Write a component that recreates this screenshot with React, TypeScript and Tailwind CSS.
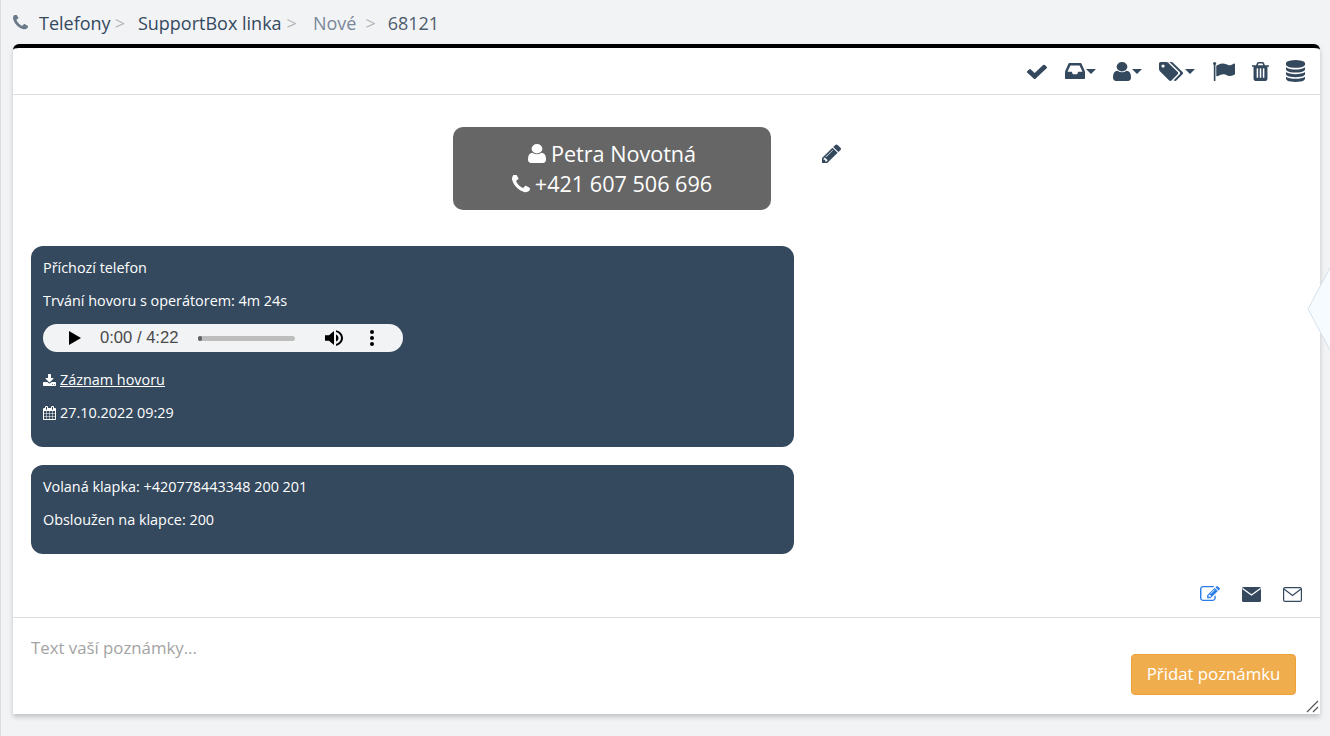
import React from "react";

const P: Record<string, { vb: string; d: string }> = {
  phone: { vb: "192 192 1408 1408", d: "M1600 1240q0 27-10 70.5t-21 68.5q-21 50-122 106-94 51-186 51-27 0-53-3.5t-57.5-12.5-47-14.5-55.5-20.5-49-18q-98-35-175-83-127-79-264-216t-216-264q-48-77-83-175-3-9-18-49t-20.5-55.5-14.5-47-12.5-57.5-3.5-53q0-92 51-186 56-101 106-122 25-11 68.5-21t70.5-10q14 0 21 3 18 6 53 76 11 19 30 54t35 63.5 31 53.5q3 4 17.5 25t21.5 35.5 7 28.5q0 20-28.5 50t-62 55-62 53-28.5 46q0 9 5 22.5t8.5 20.5 14 24 11.5 19q76 137 174 235t235 174q2 1 19 11.5t24 14 20.5 8.5 22.5 5q18 0 46-28.5t53-62 55-62 50-28.5q14 0 28.5 7t35.5 21.5 25 17.5q25 15 53.5 31t63.5 35 54 30q70 35 76 53 3 7 3 21z" },
  user: { vb: "256 128 1280 1536", d: "M1536 1399q0 109-62.5 187t-150.5 78h-854q-88 0-150.5-78t-62.5-187q0-85 8.5-160.5t31.5-152 58.5-131 94-89 134.5-34.5q131 128 313 128t313-128q76 0 134.5 34.5t94 89 58.5 131 31.5 152 8.5 160.5zm-256-887q0 159-112.5 271.5t-271.5 112.5-271.5-112.5-112.5-271.5 112.5-271.5 271.5-112.5 271.5 112.5 112.5 271.5z" },
  check: { vb: "121 270 1550 1252", d: "M1671 566q0 40-28 68l-724 724-136 136q-28 28-68 28t-68-28l-136-136-362-362q-28-28-28-68t28-68l136-136q28-28 68-28t68 28l294 295 656-657q28-28 68-28t68 28l136 136q28 28 28 68z" },
  inbox: { vb: "128 256 1536 1280", d: "M1151 960h316q-1-3-2.5-8.5t-2.5-7.5l-212-496h-708l-212 496q-1 3-2.5 8.5t-2.5 7.5h316l95 192h320zm513 30v482q0 26-19 45t-45 19h-1408q-26 0-45-19t-19-45v-482q0-62 25-123l238-552q10-25 36.5-42t52.5-17h832q26 0 52.5 17t36.5 42l238 552q25 61 25 123z" },
  tags: { vb: "29 224 1899 1515", d: "M477 544q0-53-37.5-90.5t-90.5-37.5-90.5 37.5-37.5 90.5 37.5 90.5 90.5 37.5 90.5-37.5 37.5-90.5zm1067 576q0 53-37 90l-491 492q-39 37-91 37-53 0-90-37l-715-716q-38-37-64.5-101t-26.5-117v-416q0-52 38-90t90-38h416q53 0 117 26.5t102 64.5l715 714q37 39 37 91zm384 0q0 53-37 90l-491 492q-39 37-91 37-36 0-59-14t-53-45l470-470q37-37 37-90 0-52-37-91l-715-714q-38-38-102-64.5t-117-26.5h224q53 0 117 26.5t102 64.5l715 714q37 39 37 91z" },
  flag: { vb: "64 128 1728 1536", d: "M320 256q0 72-64 110v1266q0 13-9.5 22.5t-22.5 9.5h-64q-13 0-22.5-9.5t-9.5-22.5v-1266q-64-38-64-110 0-53 37.5-90.5t90.5-37.5 90.5 37.5 37.5 90.5zm1472 64v763q0 25-12.5 38.5t-39.5 27.5q-215 116-369 116-61 0-123.5-22t-108.5-48-115.5-48-142.5-22q-192 0-464 146-17 9-33 9-26 0-45-19t-19-45v-742q0-32 31-55 21-14 79-43 236-120 421-120 107 0 200 29t219 88q38 19 88 19 54 0 117.5-21t110-47 88-47 54.5-21q26 0 45 19t19 45z" },
  trash: { vb: "192 128 1408 1536", d: "M704 1376v-704q0-14-9-23t-23-9h-64q-14 0-23 9t-9 23v704q0 14 9 23t23 9h64q14 0 23-9t9-23zm256 0v-704q0-14-9-23t-23-9h-64q-14 0-23 9t-9 23v704q0 14 9 23t23 9h64q14 0 23-9t9-23zm256 0v-704q0-14-9-23t-23-9h-64q-14 0-23 9t-9 23v704q0 14 9 23t23 9h64q14 0 23-9t9-23zm-544-992h448l-48-117q-7-9-17-11h-317q-10 2-17 11zm928 32v64q0 14-9 23t-23 9h-96v948q0 83-47 143.5t-113 60.5h-832q-66 0-113-58.5t-47-141.5v-952h-96q-14 0-23-9t-9-23v-64q0-14 9-23t23-9h309l70-167q15-37 54-63t79-26h320q40 0 79 26t54 63l70 167h309q14 0 23 9t9 23z" },
  database: { vb: "128 0 1536 1792", d: "M896 768q237 0 443-43t325-127v170q0 69-103 128t-280 93.5-385 34.5-385-34.5-280-93.5-103-128v-170q119 84 325 127t443 43zm0 768q237 0 443-43t325-127v170q0 69-103 128t-280 93.5-385 34.5-385-34.5-280-93.5-103-128v-170q119 84 325 127t443 43zm0-384q237 0 443-43t325-127v170q0 69-103 128t-280 93.5-385 34.5-385-34.5-280-93.5-103-128v-170q119 84 325 127t443 43zm0-1152q208 0 385 34.5t280 93.5 103 128v128q0 69-103 128t-280 93.5-385 34.5-385-34.5-280-93.5-103-128v-128q0-69 103-128t280-93.5 385-34.5z" },
  pencil: { vb: "128 111 1515 1553", d: "M491 1536l91-91-235-235-91 91v107h128v128h107zm523-928q0-22-22-22-10 0-17 7l-542 542q-7 7-7 17 0 22 22 22 10 0 17-7l542-542q7-7 7-17zm-54-192l416 416-832 832h-416v-416zm683 96q0 53-37 90l-166 166-416-416 166-165q36-38 90-38 53 0 91 38l235 234q37 39 37 91z" },
  download: { vb: "64 0 1664 1536", d: "M1344 1344q0-26-19-45t-45-19-45 19-19 45 19 45 45 19 45-19 19-45zm256 0q0-26-19-45t-45-19-45 19-19 45 19 45 45 19 45-19 19-45zm128-224v320q0 40-28 68t-68 28h-1472q-40 0-68-28t-28-68v-320q0-40 28-68t68-28h465l135 136q58 56 136 56t136-56l136-136h464q40 0 68 28t28 68zm-325-569q17 41-14 70l-448 448q-18 19-45 19t-45-19l-448-448q-31-29-14-70 17-39 59-39h256v-448q0-26 19-45t45-19h256q26 0 45 19t19 45v448h256q42 0 59 39z" },
  calendar: { vb: "64 0 1664 1792", d: "M192 1664h288v-288h-288v288zm352 0h320v-288h-320v288zm-352-352h288v-320h-288v320zm352 0h320v-320h-320v320zm-352-384h288v-288h-288v288zm736 736h320v-288h-320v288zm-384-736h320v-288h-320v288zm768 736h288v-288h-288v288zm-384-352h320v-320h-320v320zm-352-864v-288q0-13-9.5-22.5t-22.5-9.5h-64q-13 0-22.5 9.5t-9.5 22.5v288q0 13 9.5 22.5t22.5 9.5h64q13 0 22.5-9.5t9.5-22.5zm736 864h288v-320h-288v320zm-384-384h320v-288h-320v288zm384 0h288v-288h-288v288zm32-480v-288q0-13-9.5-22.5t-22.5-9.5h-64q-13 0-22.5 9.5t-9.5 22.5v288q0 13 9.5 22.5t22.5 9.5h64q13 0 22.5-9.5t9.5-22.5zm384-64v1280q0 52-38 90t-90 38h-1408q-52 0-90-38t-38-90v-1280q0-52 38-90t90-38h128v-96q0-66 47-113t113-47h64q66 0 113 47t47 113v96h384v-96q0-66 47-113t113-47h64q66 0 113 47t47 113v96h128q52 0 90 38t38 90z" },
  edit: { vb: "0 128 1792 1408", d: "M888 1184l116-116-152-152-116 116v56h96v96h56zm440-720q-16-16-33 1l-350 350q-17 17-1 33t33-1l350-350q17-17 1-33zm80 594v190q0 119-84.5 203.5t-203.5 84.5h-832q-119 0-203.5-84.5t-84.5-203.5v-832q0-119 84.5-203.5t203.5-84.5h832q63 0 117 25 15 7 18 23 3 17-9 29l-49 49q-14 14-32 8-23-6-45-6h-832q-66 0-113 47t-47 113v832q0 66 47 113t113 47h832q66 0 113-47t47-113v-126q0-13 9-22l64-64q15-15 35-7t20 29zm-96-738l288 288-672 672h-288v-288zm444 132l-92 92-288-288 92-92q27-27 68-27t68 27l152 152q27 27 27 68t-27 68z" },
};

const Icon = ({ n, className }: { n: string; className: string }) => (
  <svg className={className} viewBox={P[n].vb} preserveAspectRatio="none" fill="currentColor">
    <path d={P[n].d} />
  </svg>
);

const Caret = () => <span className="ml-[1px] h-0 w-0 border-x-[5px] border-t-[5px] border-x-transparent border-t-[#34495e]" />;

export default function App() {
  return (
    <div className="relative h-[736px] w-[1330px] overflow-hidden bg-[#f2f3f5] border-l border-[#dcdcdc] text-[#34495e]" style={{ fontFamily: '"Open Sans", sans-serif' }}>
      <div className="flex h-[44px] items-center pl-[12px] pt-[1px] text-[18px] leading-none">
        <Icon n="phone" className="w-[15px] h-[15px] text-[#6b7a8a]" />
        <span className="ml-[11px]">Telefony</span>
        <span className="ml-[4px] text-[#b5b5b5]">&gt;</span>
        <span className="ml-[13px]">SupportBox linka</span>
        <span className="ml-[5px] text-[#b5b5b5]">&gt;</span>
        <span className="ml-[16px] text-[#7a8799]">Nové</span>
        <span className="ml-[9px] text-[#b5b5b5]">&gt;</span>
        <span className="ml-[12px] text-[#4f5d6e]">68121</span>
      </div>
      <div className="ml-[12px] w-[1307px] h-[670px] flex flex-col bg-white border-t-4 border-black rounded-t-[6px] shadow-[0_3px_5px_rgba(0,0,0,0.2)]">
        <div className="flex h-[47px] shrink-0 items-center justify-end gap-[17px] border-b border-[#dedede] pr-[15px]">
          <Icon n="check" className="w-[20px] h-[15px]" />
          <span className="ml-[1px] flex items-center"><Icon n="inbox" className="w-[20px] h-[16px]" /><Caret /></span>
          <span className="flex items-center"><Icon n="user" className="w-[18px] h-[19px]" /><Caret /></span>
          <span className="flex items-center"><Icon n="tags" className="w-[24px] h-[19px]" /><span className="w-[1px]" /><Caret /></span>
          <span className="ml-[1px]"><Icon n="flag" className="block w-[22px] h-[19px]" /></span>
          <Icon n="trash" className="w-[17px] h-[19px]" />
          <Icon n="database" className="w-[19px] h-[22px]" />
        </div>
        <div className="flex-1 pl-[18px] pt-[32px]">
          <div className="flex items-start">
            <div className="ml-[422px] flex h-[83px] w-[318px] flex-col items-center justify-center rounded-[10px] bg-[#666666] text-[21.6px] leading-[30px] text-white">
              <div className="flex items-center"><Icon n="user" className="w-[18px] h-[19px] mr-[5px]" />Petra Novotná</div>
              <div className="flex items-center"><Icon n="phone" className="w-[18px] h-[18px] mr-[5px]" />+421 607 506 696</div>
            </div>
            <Icon n="pencil" className="ml-[51px] mt-[17px] w-[19px] h-[19px]" />
          </div>
          <div className="mt-[36px] flex h-[201px] w-[763px] flex-col rounded-[12px] bg-[#34495e] pl-[12px] pt-[12px] text-[14.4px] leading-[20px] text-white">
            <p>Příchozí telefon</p>
            <p className="mt-[13px]">Trvání hovoru s operátorem: 4m 24s</p>
            <div className="mt-[13px] flex h-[28px] w-[360px] items-center rounded-full bg-[#f1f3f4] text-black">
              <svg className="ml-[26px] w-[12px] h-[14px]" viewBox="0 0 12 14"><path d="M0 0 L12 7 L0 14 Z" fill="currentColor" /></svg>
              <span className="ml-[19px] w-[80px] whitespace-nowrap text-[16.6px] text-[#4a4a4a]" style={{ fontFamily: '"Liberation Sans", sans-serif' }}>0:00 / 4:22</span>
              <div className="relative ml-[18px] h-[5px] w-[97px] rounded-full bg-[#bdbdbd]">
                <div className="absolute left-0 top-0 h-[5px] w-[4px] rounded-full bg-[#5f6368]" />
              </div>
              <svg className="ml-[30px] w-[18px] h-[16px]" viewBox="3 3 18 18" preserveAspectRatio="none"><path fill="currentColor" d="M3 9v6h4l5 5V4L7 9H3zm13.5 3c0-1.77-1.02-3.29-2.5-4.03v8.05c1.48-.73 2.5-2.25 2.5-4.02zM14 3.23v2.06c2.89.86 5 3.54 5 6.71s-2.11 5.85-5 6.71v2.06c4.01-.91 7-4.49 7-8.77s-2.99-7.86-7-8.77z" /></svg>
              <svg className="ml-[27px] w-[4px] h-[16px]" viewBox="0 0 4 16"><circle cx="2" cy="2" r="2" fill="currentColor" /><circle cx="2" cy="8" r="2" fill="currentColor" /><circle cx="2" cy="14" r="2" fill="currentColor" /></svg>
            </div>
            <p className="mt-[18px] flex items-center"><Icon n="download" className="w-[13px] h-[12px] mr-[4px]" /><span className="underline">Záznam hovoru</span></p>
            <p className="mt-[13px] flex items-center"><Icon n="calendar" className="w-[13px] h-[14px] mr-[4px]" />27.10.2022 09:29</p>
          </div>
          <div className="mt-[18px] flex h-[89px] w-[763px] flex-col rounded-[12px] bg-[#34495e] pl-[12px] pt-[12px] text-[14.4px] leading-[20px] text-white">
            <p>Volaná klapka: +420778443348 200 201</p>
            <p className="mt-[13px]">Obsloužen na klapce: 200</p>
          </div>
        </div>
        <div className="flex h-[31px] shrink-0 items-start justify-end gap-[22px] pr-[18px]">
          <Icon n="edit" className="w-[20px] h-[15px] text-[#2b7de9]" />
          <svg className="mt-[1px] w-[19px] h-[15px]" viewBox="0 0 19 15">
            <rect width="19" height="15" rx="1.5" fill="currentColor" />
            <path d="M0.5 1.5 L9.5 8 L18.5 1.5" fill="none" stroke="white" strokeWidth="1.3" />
          </svg>
          <svg className="mt-[1px] w-[19px] h-[15px]" viewBox="0 0 19 15">
            <rect x="0.6" y="0.6" width="17.8" height="13.8" rx="1.5" fill="white" stroke="currentColor" strokeWidth="1.2" />
            <path d="M1 2 L9.5 8.5 L18 2" fill="none" stroke="currentColor" strokeWidth="1.2" />
          </svg>
        </div>
        <div className="relative flex h-[97px] shrink-0 items-start justify-between border-t border-[#dedede] pl-[18px] pr-[24px]">
          <span className="mt-[19px] text-[16.8px] leading-[22px] text-[#a3a3a3]">Text vaší poznámky...</span>
          <button className="mt-[36px] h-[41px] w-[165px] rounded-[4px] border border-[#eea236] bg-[#f0ad4e] pb-[1px] text-[16.8px] text-white">Přidat poznámku</button>
          <svg className="absolute bottom-[1px] right-[1px] w-[13px] h-[13px]" viewBox="0 0 13 13">
            <path d="M1 12 L12 1 M7 12 L12 7" stroke="#555" strokeWidth="1.2" />
          </svg>
        </div>
      </div>
      <svg className="absolute left-[1306px] top-[266px] w-[24px] h-[86px]" viewBox="0 0 24 86">
        <path d="M24 0 L1 43 L24 86 Z" fill="#f6fbff" stroke="#d5e0ee" strokeWidth="1" />
      </svg>
    </div>
  );
}
